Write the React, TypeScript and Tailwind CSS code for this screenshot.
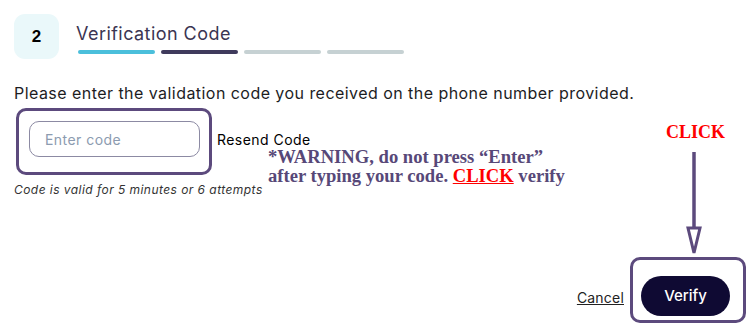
import React from "react";

const bars = ["bg-[#4bbfdb]", "bg-[#3f3a5c]", "bg-[#c6d1d3]", "bg-[#c6d1d3]"];

export default function App() {
  return (
    <div className="relative flex h-[327px] w-[756px] flex-col overflow-hidden bg-white px-[14px] pt-[14px] font-['Inter',sans-serif] tracking-[0.45px] text-[#1d1d1f]">
      {/* step header */}
      <div className="flex items-start gap-[17px]">
        <div className="flex h-[45px] w-[45px] items-center justify-center rounded-[11px] bg-[#eaf8fa] font-['Liberation_Sans',sans-serif] text-[17px] font-bold tracking-normal text-black">
          2
        </div>
        <div className="flex flex-col pt-[8px]">
          <h2 className="text-[18px] leading-[24px] text-[#3b3552]">Verification Code</h2>
          <div className="mt-[4px] flex gap-[6px] pl-[2px]">
            {bars.map((c, i) => (
              <span key={i} className={`h-[4px] w-[77px] rounded-full ${c}`} />
            ))}
          </div>
        </div>
      </div>

      <p className="mt-[22px] text-[16px] leading-[24px]">
        Please enter the validation code you received on the phone number provided.
      </p>

      <div className="mt-[3px] flex items-center">
        <div className="ml-[2px] rounded-[10px] border-[3px] border-[#5c4a7d] pb-[15px] pl-[10px] pr-[9px] pt-[10px]">
          <input
            placeholder="Enter code"
            className="h-[36px] w-[171px] rounded-[10px] border border-[#8c8aa3] px-[15px] text-[14px] outline-none placeholder:text-[#8c9bb0]"
          />
        </div>
        <span className="mb-[4px] ml-[5px] text-[14px] text-black">Resend Code</span>
      </div>

      <p className="mt-[6px] text-[12px] italic text-[#333]">Code is valid for 5 minutes or 6 attempts</p>

      <div className="-mr-[4px] mt-auto flex items-center justify-end pb-[4px]">
        <a href="#" className="mr-[6px] mt-[14px] text-[14px] tracking-[0.2px] text-[#222] underline">
          Cancel
        </a>
        <div className="rounded-[10px] border-[3px] border-[#5c4a7d] pb-[4px] pl-[8px] pr-[13px] pt-[16px]">
          <button className="h-[40px] w-[89px] rounded-full bg-[#0f0a33] text-[15px] font-medium tracking-normal text-white">
            Verify
          </button>
        </div>
      </div>

      {/* annotations */}
      <div className="absolute left-[268px] top-[147px] font-['Liberation_Serif',serif] text-[18.6px] font-bold leading-[19px] tracking-normal text-[#574878]">
        <div>*WARNING, do not press “Enter”</div>
        <div>
          after typing your code. <span className="text-[#ff0000] underline">CLICK</span> verify
        </div>
      </div>
      <div className="absolute left-[666px] top-[122px] font-['Liberation_Serif',serif] text-[18px] font-bold leading-[20px] tracking-normal text-[#ff0000]">
        CLICK
      </div>
      <svg className="absolute left-[684px] top-[150px]" width="20" height="106" viewBox="0 0 20 106">
        <line x1="10" y1="2" x2="10" y2="78" stroke="#5c4a7d" strokeWidth="3.5" />
        <polygon points="4,78 16,78 10,103" fill="white" stroke="#5c4a7d" strokeWidth="3" strokeLinejoin="miter" />
      </svg>
    </div>
  );
}
